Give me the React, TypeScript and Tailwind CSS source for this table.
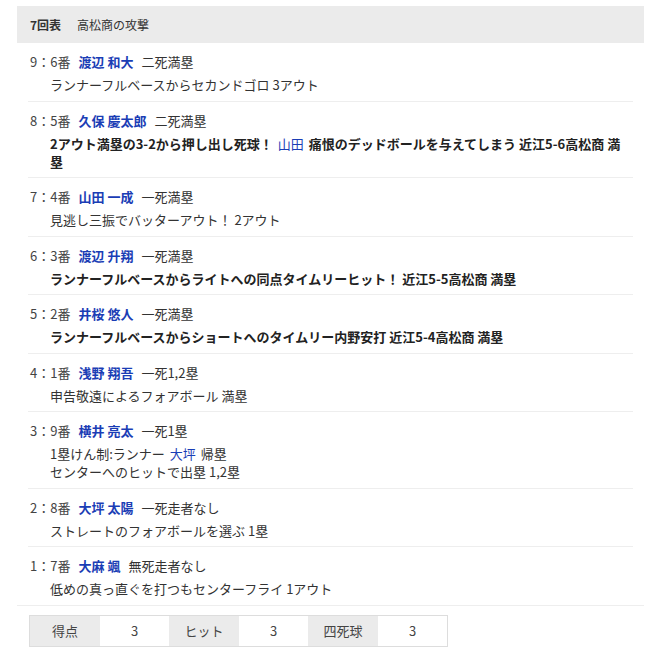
import React from "react";

type Row = {
  no: string;
  name: string;
  state: string;
  bold?: boolean;
  desc: React.ReactNode;
};

const Blue = ({ children }: { children: React.ReactNode }) => (
  <span className="text-[#1a3db5] font-normal mx-[2px]">{children}</span>
);

const rows: Row[] = [
  { no: "9：6番", name: "渡辺 和大", state: "二死満塁", desc: "ランナーフルベースからセカンドゴロ 3アウト" },
  {
    no: "8：5番",
    name: "久保 慶太郎",
    state: "二死満塁",
    bold: true,
    desc: (
      <>
        2アウト満塁の3-2から押し出し死球！ <Blue>山田</Blue> 痛恨のデッドボールを与えてしまう 近江5-6高松商 満
        <br />塁
      </>
    ),
  },
  { no: "7：4番", name: "山田 一成", state: "一死満塁", desc: "見逃し三振でバッターアウト！ 2アウト" },
  {
    no: "6：3番",
    name: "渡辺 升翔",
    state: "一死満塁",
    bold: true,
    desc: "ランナーフルベースからライトへの同点タイムリーヒット！ 近江5-5高松商 満塁",
  },
  {
    no: "5：2番",
    name: "井桜 悠人",
    state: "一死満塁",
    bold: true,
    desc: "ランナーフルベースからショートへのタイムリー内野安打 近江5-4高松商 満塁",
  },
  { no: "4：1番", name: "浅野 翔吾", state: "一死1,2塁", desc: "申告敬遠によるフォアボール 満塁" },
  {
    no: "3：9番",
    name: "横井 亮太",
    state: "一死1塁",
    desc: (
      <>
        1塁けん制:ランナー <Blue>大坪</Blue> 帰塁
        <br />
        センターへのヒットで出塁 1,2塁
      </>
    ),
  },
  { no: "2：8番", name: "大坪 太陽", state: "一死走者なし", desc: "ストレートのフォアボールを選ぶ 1塁" },
  { no: "1：7番", name: "大麻 颯", state: "無死走者なし", desc: "低めの真っ直ぐを打つもセンターフライ 1アウト" },
];

const stats: [string, string][] = [
  ["得点", "3"],
  ["ヒット", "3"],
  ["四死球", "3"],
];

export default function App() {
  return (
    <div
      className="bg-white min-h-[662px] w-[650px] pt-[6px] pl-[17px] text-[#333]"
      style={{ fontFamily: '"Noto Sans CJK JP", "Noto Sans", sans-serif' }}
    >
      <div className="w-[627px]">
        <div className="h-[37px] bg-[#ebebeb] flex items-center pl-[13px] text-[12px] text-[#333]">
          <span className="font-bold">7回表</span>
          <span className="ml-[16px]">高松商の攻撃</span>
        </div>
        <div className="px-[11px] border-b border-[#eeeeee]">
          {rows.map((r, i) => (
            <div
              key={i}
              className={`pt-[10px] pb-[6.5px] text-[13px] ${i < rows.length - 1 ? "border-b border-[#eeeeee]" : ""}`}
            >
              <div className="flex items-center leading-[18px] pl-[2px]">
                <span className="text-[#444]">{r.no}</span>
                <span className="ml-[8px] font-bold text-[#1a3db5]">{r.name}</span>
                <span className="ml-[8px] text-[#333]">{r.state}</span>
              </div>
              <div
                className={`mt-[5px] pl-[22px] leading-[18px] ${r.bold ? "font-bold text-[#222]" : "text-[#333]"}`}
              >
                {r.desc}
              </div>
            </div>
          ))}
        </div>
        <div className="ml-[12px] mt-[9px] flex w-fit border border-[#dddddd] text-[13px]">
          {stats.map(([k, v]) => (
            <React.Fragment key={k}>
              <div className="w-[70px] h-[30px] bg-[#ebebeb] flex items-center justify-center text-[#444]">{k}</div>
              <div className="w-[69px] h-[30px] bg-white flex items-center justify-center text-[#444]">{v}</div>
            </React.Fragment>
          ))}
        </div>
      </div>
    </div>
  );
}
